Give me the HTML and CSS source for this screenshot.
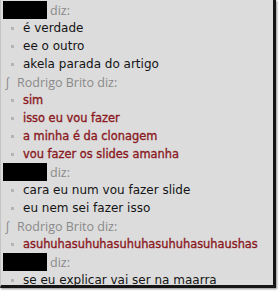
FILE: index.html
```html
<!DOCTYPE html>
<html>
<head>
<meta charset="utf-8">
<link rel="stylesheet" href="styles.css">
</head>
<body>
<div class="frame">
  <div class="chat">
    <div class="who"><span class="mask"></span><span class="diz">diz:</span></div>
    <div class="msg plain">é verdade</div>
    <div class="msg plain">ee o outro</div>
    <div class="msg plain">akela parada do artigo</div>
    <div class="who named"><span class="sig">∫</span><span>Rodrigo Brito diz:</span></div>
    <div class="msg red">sim</div>
    <div class="msg red">isso eu vou fazer</div>
    <div class="msg red">a minha é da clonagem</div>
    <div class="msg red">vou fazer os slides amanha</div>
    <div class="who"><span class="mask"></span><span class="diz">diz:</span></div>
    <div class="msg plain">cara eu num vou fazer slide</div>
    <div class="msg plain">eu nem sei fazer isso</div>
    <div class="who named"><span class="sig">∫</span><span>Rodrigo Brito diz:</span></div>
    <div class="msg red">asuhuhasuhuhasuhuhasuhuhasuhaushas</div>
    <div class="who"><span class="mask"></span><span class="diz">diz:</span></div>
    <div class="msg plain">se eu explicar vai ser na maarra</div>
  </div>
</div>
</body>
</html>
```

FILE: styles.css
```css
html, body {
  margin: 0;
  padding: 0;
  background: #ffffff;
}
.frame {
  width: 279px;
  height: 292px;
  background: #ffffff;
}
.chat {
  box-sizing: border-box;
  width: 276px;
  height: 288px;
  padding-top: 1px;
  background: #dcdcdc;
  border-left: 1px solid #c4c4c4;
  border-right: 3px solid #151515;
  border-bottom: 3px solid #151515;
  box-shadow: 1px 1px 2px rgba(0,0,0,0.45);
  display: flex;
  flex-direction: column;
  overflow: hidden;
}
.who, .msg {
  height: 18px;
  flex: none;
  display: flex;
  align-items: center;
  white-space: nowrap;
}
.who {
  font-family: "Open Sans", "Liberation Sans", sans-serif;
  font-size: 12.5px;
  color: #8a8a8a;
  padding-left: 2px;
}
.mask {
  width: 44px;
  height: 18px;
  background: #000;
  margin-right: 3px;
}
.named {
  padding-left: 4px;
}
.sig {
  width: 12px;
  color: #8a8a8a;
}
.msg {
  padding-left: 10px;
}
.msg::before {
  content: "";
  width: 3px;
  height: 3px;
  background: #b4b4b4;
  margin-right: 9px;
  flex: none;
}
.plain {
  font-family: "DejaVu Sans", sans-serif;
  font-size: 12px;
  color: #141414;
}
.red {
  font-family: "DejaVu Sans", sans-serif;
  font-size: 11.4px;
  font-weight: normal;
  -webkit-text-stroke: 0.35px #8a1a1f;
  color: #8a1a1f;
}
```
